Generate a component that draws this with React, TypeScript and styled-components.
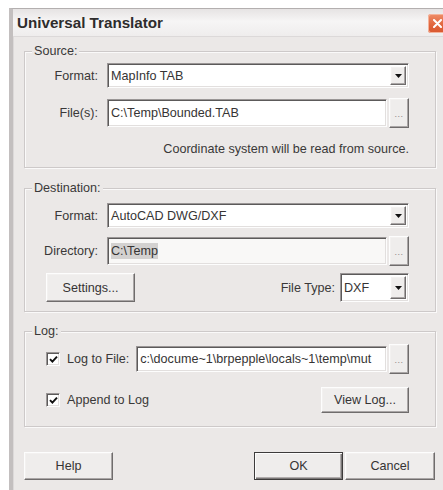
import React from "react";
import styled, { createGlobalStyle } from "styled-components";

const GlobalStyle = createGlobalStyle`
  html, body {
    margin: 0;
    padding: 0;
    background: #ffffff;
    overflow: hidden;
    width: 443px;
    height: 490px;
  }
  body {
    font-family: "Liberation Sans", Arial, sans-serif;
    font-size: 12.6px;
    color: #3a3838;
  }
`;

const Page = styled.div`
  height: 490px;
  box-sizing: border-box;
  padding: 8px 0 0 9px;
`;

const Window = styled.div`
  width: 442px;
  height: 482px;
  box-sizing: border-box;
  background: #ebe8e7;
  border-top: 1px solid #b3afaf;
  border-left: 4px solid #c3bfbf;
  box-shadow: inset 1px 0 0 #dcd9d9;
  display: flex;
  flex-direction: column;
`;

const TitleBar = styled.div`
  height: 27px;
  display: flex;
  align-items: center;
  padding-left: 4px;
  background: linear-gradient(#e6e3e3, #f6f5f5 45%, #efeded);
  border-bottom: 1px solid #dcd9d9;
`;

const Title = styled.span`
  flex: 1;
  font-weight: bold;
  font-size: 15.2px;
  color: #2e2c2c;
`;

const CloseButton = styled.div`
  width: 19px;
  height: 19px;
  margin-top: 1px;
  margin-right: 4px;
  border-radius: 3px;
  background: linear-gradient(#ef8d68, #e0643c 60%, #d9582f);
  box-shadow: inset 0 0 0 1px #f4b39b;
  display: flex;
  align-items: center;
  justify-content: center;
`;

const Body = styled.div`
  padding: 14px 0 0 11px;
  width: 412px;
  display: flex;
  flex-direction: column;
`;

const Group = styled.div<{ $h: number; $pt: number; $mt: number }>`
  position: relative;
  height: ${(p) => p.$h}px;
  margin-top: ${(p) => p.$mt}px;
  box-sizing: border-box;
  border: 1px solid #cdc9c9;
  box-shadow: inset 1px 1px 0 #faf9f9, 1px 1px 0 #faf9f9;
  padding: ${(p) => p.$pt}px 26px 0 0;
  display: flex;
  flex-direction: column;
`;

const Legend = styled.span`
  position: absolute;
  top: -9px;
  left: 7px;
  padding: 0 2px;
  background: #ebe8e7;
  line-height: 16px;
`;

const Row = styled.div<{ $mt?: number; $h: number; $pl?: number }>`
  display: flex;
  align-items: center;
  height: ${(p) => p.$h}px;
  margin-top: ${(p) => p.$mt ?? 0}px;
  padding-left: ${(p) => p.$pl ?? 0}px;
`;

const FieldLabel = styled.span`
  width: 73px;
  margin-right: 9px;
  text-align: right;
  white-space: nowrap;
`;

const Note = styled.div`
  margin-top: 14px;
  line-height: 16px;
  text-align: right;
`;

const sunken = `
  box-sizing: border-box;
  border-top: 1px solid #9a9696;
  border-left: 1px solid #9a9696;
  border-right: 1px solid #fdfdfd;
  border-bottom: 1px solid #fdfdfd;
  box-shadow: inset 1px 1px 0 #5c5a5a, inset -1px -1px 0 #e2dfde;
`;

const raised = `
  box-sizing: border-box;
  border-top: 1px solid #fdfdfd;
  border-left: 1px solid #fdfdfd;
  border-right: 1px solid #6f6c6c;
  border-bottom: 1px solid #6f6c6c;
  box-shadow: inset -1px -1px 0 #aaa6a6, inset 1px 1px 0 #f3f1f0;
  background: #efedec;
`;

const Field = styled.div<{ $bg?: string }>`
  ${sunken}
  flex: 1;
  height: 100%;
  background: ${(p) => p.$bg ?? "#ffffff"};
  display: flex;
  align-items: center;
  padding: 0 3px;
  white-space: nowrap;
  overflow: hidden;
  color: #363434;
`;

const Combo = styled.div<{ $w?: number }>`
  ${sunken}
  ${(p) => (p.$w ? `width: ${p.$w}px;` : "flex: 1;")}
  height: 100%;
  background: #ffffff;
  display: flex;
  align-items: stretch;
  padding: 2px 2px 2px 3px;
`;

const ComboText = styled.span`
  flex: 1;
  display: flex;
  align-items: center;
  white-space: nowrap;
  color: #363434;
`;

const ComboArrow = styled.span`
  ${raised}
  width: 16px;
  display: flex;
  align-items: center;
  justify-content: center;
`;

const Selected = styled.span`
  background: #d3d1d0;
  padding: 1px 0;
`;

const DotsButton = styled.div`
  ${raised}
  width: 20px;
  height: 30px;
  margin-left: 2px;
  display: flex;
  align-items: flex-end;
  justify-content: center;
  padding-bottom: 8px;
  font-size: 9px;
  color: #8a8787;
  letter-spacing: 0.5px;
`;

const Button = styled.div<{ $w: number; $h: number; $default?: boolean }>`
  ${raised}
  width: ${(p) => p.$w}px;
  height: ${(p) => p.$h}px;
  display: flex;
  align-items: center;
  justify-content: center;
  color: #363434;
  ${(p) =>
    p.$default
      ? `border: 1px solid #3d3b3b; box-shadow: inset 1px 1px 0 #fdfdfd, inset -1px -1px 0 #7a7777, inset -2px -2px 0 #b0acac;`
      : ""}
`;

const Spacer = styled.div`
  flex: 1;
`;

const Check = styled.span`
  ${sunken}
  width: 14px;
  height: 14px;
  background: #ffffff;
  display: flex;
  align-items: center;
  justify-content: center;
`;

const CheckLabel = styled.span<{ $ml: number; $mr?: number }>`
  margin-left: ${(p) => p.$ml}px;
  margin-right: ${(p) => p.$mr ?? 0}px;
  white-space: nowrap;
`;

const TypeLabel = styled.span`
  margin-right: 5px;
`;

const ButtonBar = styled.div`
  display: flex;
  align-items: center;
  margin-top: 25px;
  gap: 2px;
  padding-right: 1px;
`;

const Arrow = () => (
  <svg width="7" height="4" viewBox="0 0 7 4">
    <path d="M0 0h7L3.5 4z" fill="#111" />
  </svg>
);

const Tick = () => (
  <svg width="9" height="9" viewBox="0 0 9 9">
    <path d="M1 4.2l2.4 2.5L8 1.6" fill="none" stroke="#111" strokeWidth="1.9" />
  </svg>
);

const CloseX = () => (
  <svg width="9" height="9" viewBox="0 0 9 9">
    <path d="M1 1l7 7M8 1L1 8" stroke="#fff" strokeWidth="2" strokeLinecap="round" />
  </svg>
);

export default function App() {
  return (
    <>
      <GlobalStyle />
      <Page>
        <Window>
          <TitleBar>
            <Title>Universal Translator</Title>
            <CloseButton>
              <CloseX />
            </CloseButton>
          </TitleBar>
          <Body>
            <Group $h={117} $pt={11} $mt={0}>
              <Legend>Source:</Legend>
              <Row $h={25}>
                <FieldLabel>Format:</FieldLabel>
                <Combo>
                  <ComboText>MapInfo TAB</ComboText>
                  <ComboArrow>
                    <Arrow />
                  </ComboArrow>
                </Combo>
              </Row>
              <Row $h={28} $mt={11}>
                <FieldLabel>File(s):</FieldLabel>
                <Field>C:\Temp\Bounded.TAB</Field>
                <DotsButton>...</DotsButton>
              </Row>
              <Note>Coordinate system will be read from source.</Note>
            </Group>

            <Group $h={124} $pt={14} $mt={20}>
              <Legend>Destination:</Legend>
              <Row $h={25}>
                <FieldLabel>Format:</FieldLabel>
                <Combo>
                  <ComboText>AutoCAD DWG/DXF</ComboText>
                  <ComboArrow>
                    <Arrow />
                  </ComboArrow>
                </Combo>
              </Row>
              <Row $h={28} $mt={9}>
                <FieldLabel>Directory:</FieldLabel>
                <Field $bg="#f9f8f7">
                  <Selected>C:\Temp</Selected>
                </Field>
                <DotsButton>...</DotsButton>
              </Row>
              <Row $h={29} $mt={8} $pl={21}>
                <Button $w={89} $h={29}>
                  Settings...
                </Button>
                <Spacer />
                <TypeLabel>File Type:</TypeLabel>
                <Combo $w={69}>
                  <ComboText>DXF</ComboText>
                  <ComboArrow>
                    <Arrow />
                  </ComboArrow>
                </Combo>
              </Row>
            </Group>

            <Group $h={96} $pt={14} $mt={19}>
              <Legend>Log:</Legend>
              <Row $h={26} $pl={21}>
                <Check>
                  <Tick />
                </Check>
                <CheckLabel $ml={7} $mr={7}>
                  Log to File:
                </CheckLabel>
                <Field>c:\docume~1\brpepple\locals~1\temp\mut</Field>
                <DotsButton>...</DotsButton>
              </Row>
              <Row $h={26} $mt={15} $pl={21}>
                <Check>
                  <Tick />
                </Check>
                <CheckLabel $ml={7}>Append to Log</CheckLabel>
                <Spacer />
                <Button $w={88} $h={26}>
                  View Log...
                </Button>
              </Row>
            </Group>

            <ButtonBar>
              <Button $w={89} $h={28}>
                Help
              </Button>
              <Spacer />
              <Button $w={89} $h={28} $default>
                OK
              </Button>
              <Button $w={90} $h={28}>
                Cancel
              </Button>
            </ButtonBar>
          </Body>
        </Window>
      </Page>
    </>
  );
}
